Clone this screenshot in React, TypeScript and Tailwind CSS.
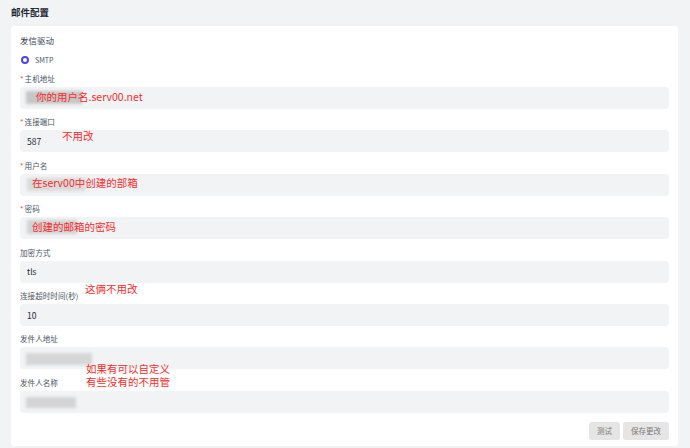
import React from 'react';

const font = { fontFamily: '"Noto Sans CJK SC", "Noto Sans", sans-serif' };

type Field = {
  label: string;
  required?: boolean;
  value?: string;
  overlay?: React.ReactNode;
};

const Blur: React.FC<{ className: string }> = ({ className }) => (
  <div className={`absolute blur-[1.5px] ${className}`} />
);

const Note: React.FC<{ className: string; children: React.ReactNode }> = ({ className, children }) => (
  <div className={`absolute whitespace-nowrap text-[10.5px] leading-[13px] text-[#fb2b2b] ${className}`}>{children}</div>
);

const fields: Field[] = [
  {
    label: '主机地址',
    required: true,
    overlay: (
      <>
        <Blur className="left-[6px] top-[4px] w-[56px] h-[13px] bg-[#c6c6c6]" />
        <Note className="left-[16px] top-[3px]">你的用户名.serv00.net</Note>
      </>
    ),
  },
  {
    label: '连接端口',
    required: true,
    value: '587',
    overlay: <Note className="left-[42px] top-[-1px]">不用改</Note>,
  },
  {
    label: '用户名',
    required: true,
    overlay: (
      <>
        <Blur className="left-[7px] top-[4px] w-[58px] h-[13px] bg-[#dadada]" />
        <Note className="left-[12px] top-[2px]">在serv00中创建的部箱</Note>
      </>
    ),
  },
  {
    label: '密码',
    required: true,
    overlay: (
      <>
        <Blur className="left-[7px] top-[3px] w-[50px] h-[14px] bg-[#d2d2d2]" />
        <Note className="left-[12px] top-[3px]">创建的邮箱的密码</Note>
      </>
    ),
  },
  {
    label: '加密方式',
    value: 'tls',
    overlay: <Note className="left-[65px] top-[21px]">这俩不用改</Note>,
  },
  { label: '连接超时时间(秒)', value: '10' },
  {
    label: '发件人地址',
    overlay: (
      <>
        <Blur className="left-[6px] top-[6px] w-[66px] h-[12px] bg-[#d6d6d6]" />
        <Note className="left-[66px] top-[15px]">如果有可以自定义</Note>
        <Note className="left-[66px] top-[28px]">有些没有的不用管</Note>
      </>
    ),
  },
  {
    label: '发件人名称',
    overlay: <Blur className="left-[6px] top-[6px] w-[50px] h-[11px] bg-[#d4d4d4]" />,
  },
];

const App: React.FC = () => {
  return (
    <div className="w-[690px] h-[448px] overflow-hidden bg-[#f2f3f5] pl-[11px] pr-[12px]" style={font}>
      <h2 className="h-[26px] pt-[5px] text-[9.5px] leading-[14px] font-bold text-[#1f2937]">邮件配置</h2>
      <div className="h-[420px] bg-white rounded-[4px] px-[9px] pt-[7px]">
        <div className="h-[14px] text-[8.5px] leading-[14px] text-[#374151]">发信驱动</div>
        <div className="mt-[6px] h-[14px] flex items-center gap-[6px]">
          <span className="ml-[1px] w-[8px] h-[8px] rounded-full border-[2.5px] border-[#4f46e5] bg-white" />
          <span className="text-[7px] text-[#4b5563]">SMTP</span>
        </div>
        <div className="mt-[5px] flex flex-col gap-[6.4px]">
          {fields.map((f) => (
            <div key={f.label}>
              <div className="h-[14px] mb-[1px] text-[7.6px] leading-[14px] text-[#4b5563]">
                {f.required && <span className="text-[#ef4444] mr-[1px]">*</span>}
                {f.label}
              </div>
              <div className="relative h-[22px] rounded-[4px] bg-[#f2f3f5] pl-[7px] flex items-center text-[8.5px] text-[#1f2937]">
                {f.value}
                {f.overlay}
              </div>
            </div>
          ))}
        </div>
        <div className="mt-[9px] flex justify-end gap-[3px]">
          <button className="h-[18px] w-[31px] rounded-[3px] bg-[#e5e5e5] text-[7.5px] text-[#7a7a7a]">测试</button>
          <button className="h-[18px] w-[46px] rounded-[3px] bg-[#e5e5e5] text-[7.5px] text-[#7a7a7a]">保存更改</button>
        </div>
      </div>
    </div>
  );
};

export default App;
